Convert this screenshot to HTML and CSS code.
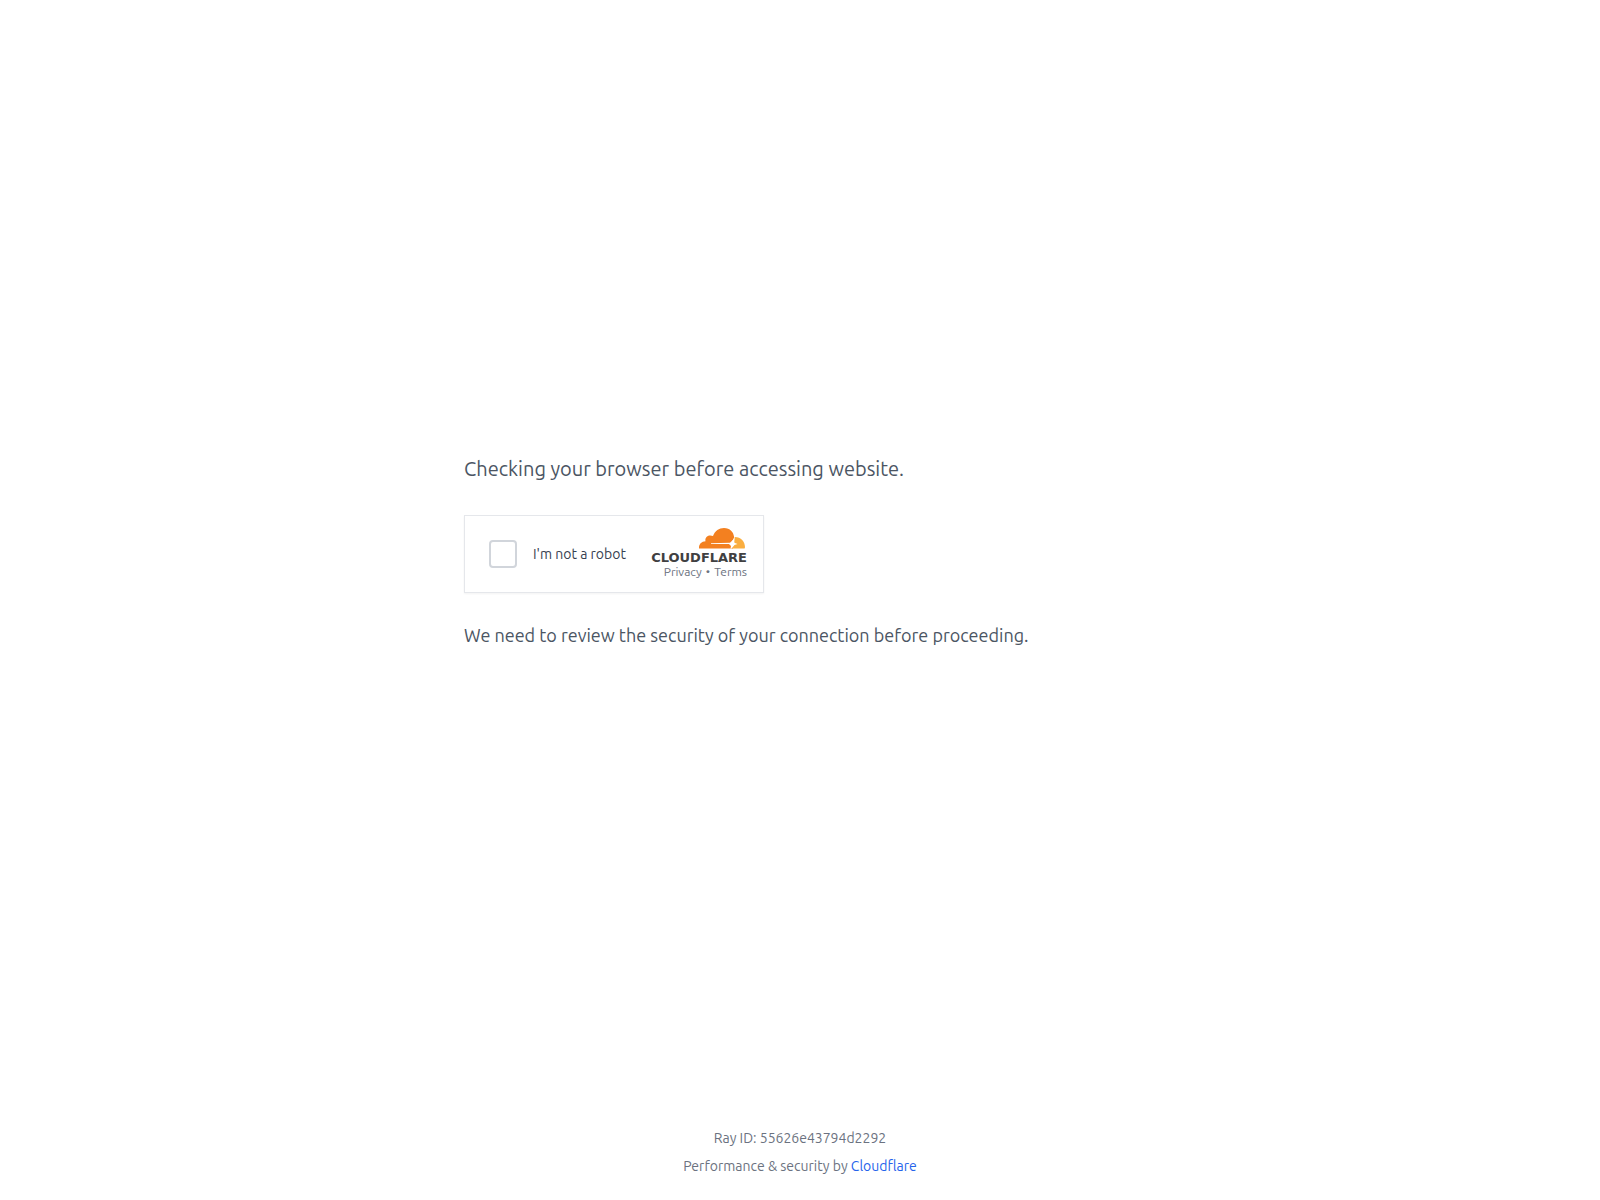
FILE: index.html
```html
<!DOCTYPE html>
<html lang="en">
<head>
<meta charset="utf-8">
<meta name="viewport" content="width=device-width, initial-scale=1">
<title>Checking your browser</title>
<link rel="stylesheet" href="styles.css">
</head>
<body>
<main class="main">
  <div class="content">
    <h1 class="title">Checking your browser before accessing website.</h1>
    <div class="card">
      <label class="check"><input class="box" type="checkbox"><span>I'm not a robot</span></label>
      <div class="brand">
        <svg class="cloud" viewBox="0 0 46 21" aria-hidden="true">
          <path fill="#f38020" d="M0 20.500C-.3 16.500 2 13.500 6.500 13.200C5.500 9.300 9.500 6 14 8C16 2.800 20 0 25 0C31 0 34.600 4 35.200 9.300L32.500 14.700L34 20.500Z"/>
          <path fill="#faae40" d="M35.800 9C42 9 46 13.600 46 19.200L45.600 20.500H33L35 16Z"/>
          <path fill="#fff" d="M12 15.200L31 14.800L34.400 11.500L35.400 14.800L38.500 16L35.500 17L32.500 20.500H31.500L32 18L30 16L12 16Z"/>
        </svg>
        <span class="wordmark">CLOUDFLARE</span>
        <div class="legal"><a href="#privacy">Privacy</a><span>•</span><a href="#terms">Terms</a></div>
      </div>
    </div>
    <p class="note">We need to review the security of your connection before proceeding.</p>
  </div>
</main>
<footer class="footer">
  <p>Ray ID: 55626e43794d2292</p>
  <p>Performance &amp; security by <a class="link" href="#cloudflare">Cloudflare</a></p>
</footer>
</body>
</html>
```
FILE: styles.css
```css
* { box-sizing: border-box; }
body {
  margin: 0;
  min-height: 100vh;
  display: flex;
  flex-direction: column;
  background: #fff;
  color: #4b5563;
  font-family: Ubuntu, "Noto Sans", sans-serif;
}
h1, p { margin: 0; }
a { color: inherit; text-decoration: none; }
.main {
  flex: 1;
  display: flex;
  align-items: center;
  justify-content: center;
  padding-bottom: 20px;
}
.content { width: 100%; max-width: 672px; }
.title { font-size: 20px; line-height: 28px; font-weight: 400; }
.card {
  display: flex;
  align-items: center;
  justify-content: space-between;
  width: 300px;
  max-width: 100%;
  height: 78px;
  margin: 32px 0 28px;
  padding: 0 16px 0 24px;
  border: 1px solid #e5e7eb;
  box-shadow: 0 1px 2px rgba(0, 0, 0, .05);
}
.check {
  display: flex;
  align-items: center;
  gap: 16px;
  color: #374151;
  font-size: 14px;
  line-height: 20px;
  white-space: nowrap;
}
.box {
  appearance: none;
  width: 28px;
  height: 28px;
  margin: 0;
  border: 2px solid #d1d5db;
  border-radius: 4px;
  background: #fff;
}
.brand { display: flex; flex-direction: column; align-items: flex-end; }
.cloud { width: 46px; height: 21px; margin: 0 2px 2px 0; }
.wordmark {
  color: #404041;
  font: 700 13px/13px "DejaVu Sans", sans-serif;
}
.legal {
  display: flex;
  gap: 4px;
  color: #6b7280;
  font-size: 12px;
  line-height: 16px;
}
.note { font-size: 18px; line-height: 28px; }
.footer {
  padding: 0 16px 20px;
  color: #6b7280;
  font-size: 14px;
  line-height: 28px;
  text-align: center;
}
.link { color: #2563eb; }
```
